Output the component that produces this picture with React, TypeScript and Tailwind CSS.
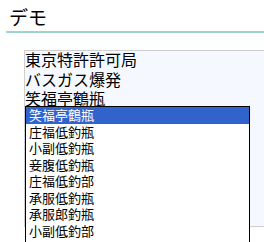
import React from "react";

const items = [
  "笑福亭鶴瓶",
  "庄福低釣瓶",
  "小副低釣瓶",
  "妾腹低釣瓶",
  "庄福低釣部",
  "承服低釣瓶",
  "承服郎釣瓶",
  "小副低釣部",
];

export default function App() {
  return (
    <div
      className="relative w-[264px] h-[242px] overflow-hidden bg-white text-black"
      style={{ fontFamily: '"Noto Sans CJK JP", "Noto Sans", sans-serif' }}
    >
      <h1 className="pl-[9px] pt-[6px] text-[19px] leading-[22px] font-normal">デモ</h1>
      <div className="ml-[6px] mt-[3px] h-[2px] bg-[#9fd3cf]" />
      <div className="relative ml-[24px] mt-[17px] h-[177px] w-[260px] border border-[#cfcfcf] bg-[#f5f9ff]">
        <div className="-mt-[2px] text-[16px] leading-[20px]">
          <div>東京特許許可局</div>
          <div>バスガス爆発</div>
          <div className="h-[17px] leading-[17px] pt-[1px]">笑福亭鶴瓶</div>
        </div>
        <div className="absolute left-0 top-[55px] w-[225px] h-[150px] border border-black bg-white text-[13px] leading-[16.5px]">
          {items.map((t, i) => (
            <div
              key={i}
              className={
                "pl-[3px] h-[16.5px] " +
                (i === 0 ? "bg-[#3163cc] text-white" : "")
              }
            >
              {t}
            </div>
          ))}
        </div>
      </div>
    </div>
  );
}
